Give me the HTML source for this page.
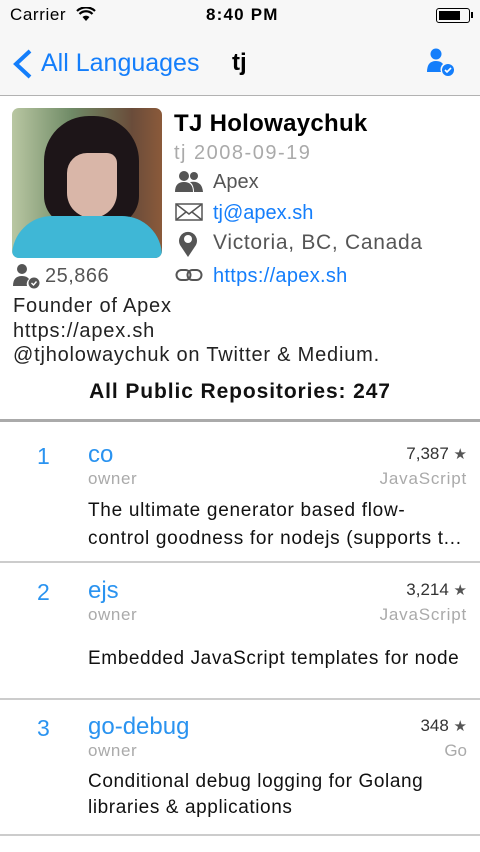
<!DOCTYPE html><html><head><meta charset="utf-8"><style>
*{margin:0;padding:0;box-sizing:border-box}
body{width:480px;height:852px;overflow:hidden;background:#fff;font-family:"Liberation Sans",sans-serif;position:relative}
.a{position:absolute;white-space:nowrap}
.blue{color:#147efb}
.lb{color:#2a93f0}
.g{color:#aaa}
</style></head><body>
<div class="a" style="left:0;top:0;width:480px;height:96px;background:#f7f7f7;border-bottom:1px solid #b2b2b2"></div>
<div class="a" style="left:10px;top:5px;font-size:17px;letter-spacing:0.6px">Carrier</div>
<svg class="a" style="left:76px;top:7px" width="20" height="15" viewBox="0 0 20 15"><path d="M10 14 L6.5 10 A5 5 0 0 1 13.5 10Z" fill="#000"/><path d="M3.5 7 A9 9 0 0 1 16.5 7" stroke="#000" stroke-width="2.2" fill="none"/><path d="M1 4 A13 13 0 0 1 19 4" stroke="#000" stroke-width="2.2" fill="none"/></svg>
<div class="a" style="left:206px;top:5px;font-size:17px;font-weight:bold;letter-spacing:1.2px">8:40 PM</div>
<div class="a" style="left:436px;top:8px;width:34px;height:15px;border:1.5px solid #000;border-radius:3px"><div style="margin:1.5px;width:21px;height:9px;background:#000"></div></div>
<div class="a" style="left:471px;top:12px;width:2px;height:6px;background:#000"></div>
<svg class="a" style="left:11px;top:48px" width="22" height="32" viewBox="0 0 22 32"><path d="M19 3 L5 16 L19 29" stroke="#147efb" stroke-width="4" fill="none"/></svg>
<div class="a blue" style="left:41px;top:49px;font-size:25px">All Languages</div>
<div class="a" style="left:232px;top:49px;font-size:24px;font-weight:bold">tj</div>
<svg class="a" style="left:426px;top:47px" width="30" height="30" viewBox="0 0 30 30"><circle cx="10" cy="7" r="5.5" fill="#147efb"/><path d="M1 25 Q1 14 10 14 Q15 14 17 17 A7 7 0 0 0 15 25Z" fill="#147efb"/><circle cx="22" cy="23" r="6" fill="#147efb"/><path d="M19 23 l2 2 l4 -4" stroke="#fff" stroke-width="1.6" fill="none"/></svg>

<div class="a" style="left:12px;top:108px;width:150px;height:150px;border-radius:7px;overflow:hidden;background:linear-gradient(90deg,#b9c7a2,#6f8a66 40%,#6a4c3a 80%,#8b5a3a)">
<div style="position:absolute;left:32px;top:8px;width:95px;height:110px;background:#1d1518;border-radius:45px 45px 30px 30px"></div>
<div style="position:absolute;left:55px;top:45px;width:50px;height:65px;background:#d9b6a8;border-radius:20px 10px 25px 25px"></div>
<div style="position:absolute;left:0;top:108px;width:150px;height:42px;background:#3fb7d6;border-radius:40px 40px 0 0"></div>
</div>
<div class="a" style="left:174px;top:110px;font-size:24px;font-weight:bold;letter-spacing:0.3px">TJ Holowaychuk</div>
<div class="a g" style="left:174px;top:142px;font-size:20px;letter-spacing:1.5px">tj 2008-09-19</div>
<svg class="a" style="left:175px;top:170px" width="28" height="24" viewBox="0 0 28 24"><circle cx="9" cy="6" r="5" fill="#555"/><circle cx="19" cy="6" r="4" fill="#555"/><path d="M0 22 Q0 12 9 12 Q18 12 18 22Z" fill="#555"/><path d="M15 12 Q27 10 28 22 L19 22 Q19 15 15 12Z" fill="#555"/></svg>
<div class="a" style="left:213px;top:171px;font-size:20px;color:#555">Apex</div>
<svg class="a" style="left:175px;top:203px" width="28" height="18" viewBox="0 0 28 18"><rect x="1" y="1" width="26" height="16" fill="none" stroke="#555" stroke-width="1.5"/><path d="M1 1 L14 11 L27 1 M1 17 L11 9 M27 17 L17 9" stroke="#555" stroke-width="1.5" fill="none"/></svg>
<div class="a blue" style="left:213px;top:202px;font-size:20px">tj@apex.sh</div>
<svg class="a" style="left:177px;top:230px" width="22" height="28" viewBox="0 0 22 28"><path d="M11 27 L3 15 A9 9 0 1 1 19 15Z" fill="#555"/><circle cx="11" cy="9" r="4" fill="#fff"/></svg>
<div class="a" style="left:213px;top:231px;font-size:21px;color:#555;letter-spacing:0.7px">Victoria, BC, Canada</div>
<svg class="a" style="left:175px;top:268px" width="28" height="14" viewBox="0 0 28 14"><rect x="1.5" y="2" width="14" height="10" rx="5" fill="none" stroke="#555" stroke-width="2"/><rect x="12.5" y="2" width="14" height="10" rx="5" fill="none" stroke="#555" stroke-width="2"/></svg>
<div class="a blue" style="left:213px;top:265px;font-size:20px;letter-spacing:0.3px">https://apex.sh</div>
<svg class="a" style="left:13px;top:263px" width="28" height="26" viewBox="0 0 28 26"><circle cx="9" cy="6" r="5" fill="#555"/><path d="M0 23 Q0 13 9 13 Q14 13 16 16 A7 7 0 0 0 14 23Z" fill="#555"/><circle cx="21" cy="20" r="5.5" fill="#555"/><path d="M18.5 20 l2 2 l3 -3.5" stroke="#fff" stroke-width="1.4" fill="none"/></svg>
<div class="a" style="left:45px;top:265px;font-size:20px;color:#555;letter-spacing:0.5px">25,866</div>
<div class="a" style="left:13px;top:294px;font-size:20px;line-height:24.5px;color:#222;letter-spacing:0.8px">Founder of Apex<br>https://apex.sh<br>@tjholowaychuk on Twitter &amp; Medium.</div>
<div class="a" style="left:0;width:480px;text-align:center;top:380px;font-size:21px;font-weight:bold;color:#111;letter-spacing:0.9px">All Public Repositories: 247</div>
<div class="a" style="left:0;top:419px;width:480px;height:3px;background:#aaa"></div>

<div class="a lb" style="left:37px;top:443px;font-size:23px">1</div>
<div class="a lb" style="left:88px;top:441px;font-size:24px">co</div>
<div class="a g" style="left:88px;top:469px;font-size:17px;letter-spacing:0.6px">owner</div>
<div class="a" style="right:13px;top:444px;font-size:17px;color:#333">7,387 <span style="font-size:15px;color:#555">★</span></div>
<div class="a g" style="right:13px;top:469px;font-size:17px;letter-spacing:0.8px">JavaScript</div>
<div class="a" style="left:88px;top:497px;font-size:19px;line-height:28px;color:#111;letter-spacing:0.7px">The ultimate generator based flow-<br>control goodness for nodejs (supports t...</div>
<div class="a" style="left:0;top:561px;width:480px;height:1.5px;background:#ccc"></div>

<div class="a lb" style="left:37px;top:579px;font-size:23px">2</div>
<div class="a lb" style="left:88px;top:577px;font-size:24px">ejs</div>
<div class="a g" style="left:88px;top:605px;font-size:17px;letter-spacing:0.6px">owner</div>
<div class="a" style="right:13px;top:580px;font-size:17px;color:#333">3,214 <span style="font-size:15px;color:#555">★</span></div>
<div class="a g" style="right:13px;top:605px;font-size:17px;letter-spacing:0.8px">JavaScript</div>
<div class="a" style="left:88px;top:648px;font-size:19px;color:#111;letter-spacing:0.6px">Embedded JavaScript templates for node</div>
<div class="a" style="left:0;top:698px;width:480px;height:1.5px;background:#ccc"></div>

<div class="a lb" style="left:37px;top:715px;font-size:23px">3</div>
<div class="a lb" style="left:88px;top:713px;font-size:24px">go-debug</div>
<div class="a g" style="left:88px;top:741px;font-size:17px;letter-spacing:0.6px">owner</div>
<div class="a" style="right:13px;top:716px;font-size:17px;color:#333">348 <span style="font-size:15px;color:#555">★</span></div>
<div class="a g" style="right:13px;top:741px;font-size:17px">Go</div>
<div class="a" style="left:88px;top:769px;font-size:19px;line-height:26px;color:#111;letter-spacing:0.6px">Conditional debug logging for Golang<br>libraries &amp; applications</div>
<div class="a" style="left:0;top:834px;width:480px;height:1.5px;background:#ccc"></div>
</body></html>
